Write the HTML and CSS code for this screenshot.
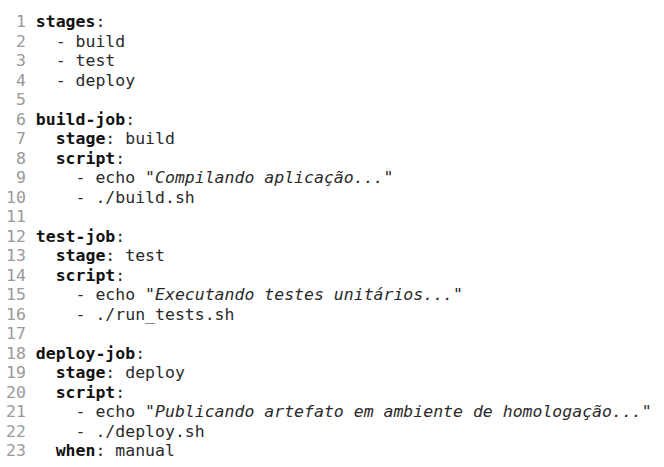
FILE: index.html
```html
<!DOCTYPE html>
<html>
<head>
<meta charset="utf-8">
<link rel="stylesheet" href="styles.css">
</head>
<body>
<pre class="code"><span class="ln"> 1</span> <b>stages</b>:
<span class="ln"> 2</span>   - build
<span class="ln"> 3</span>   - test
<span class="ln"> 4</span>   - deploy
<span class="ln"> 5</span>
<span class="ln"> 6</span> <b>build-job</b>:
<span class="ln"> 7</span>   <b>stage</b>: build
<span class="ln"> 8</span>   <b>script</b>:
<span class="ln"> 9</span>     - echo "<i>Compilando aplicação...</i>"
<span class="ln">10</span>     - ./build.sh
<span class="ln">11</span>
<span class="ln">12</span> <b>test-job</b>:
<span class="ln">13</span>   <b>stage</b>: test
<span class="ln">14</span>   <b>script</b>:
<span class="ln">15</span>     - echo "<i>Executando testes unitários...</i>"
<span class="ln">16</span>     - ./run_tests.sh
<span class="ln">17</span>
<span class="ln">18</span> <b>deploy-job</b>:
<span class="ln">19</span>   <b>stage</b>: deploy
<span class="ln">20</span>   <b>script</b>:
<span class="ln">21</span>     - echo "<i>Publicando artefato em ambiente de homologação...</i>"
<span class="ln">22</span>     - ./deploy.sh
<span class="ln">23</span>   <b>when</b>: manual</pre>
</body>
</html>
```
FILE: styles.css
```css
html, body {
  margin: 0;
  padding: 0;
  background: #ffffff;
}
.code {
  margin: 0;
  padding: 12px 0 0 6px;
  font-family: "DejaVu Sans Mono", monospace;
  font-size: 16.5px;
  line-height: 19.5px;
  color: #2a2a2a;
}
.code b {
  color: #111111;
  font-weight: bold;
}
.code i {
  font-style: italic;
  color: #2a2a2a;
}
.ln {
  color: #999999;
}
```
